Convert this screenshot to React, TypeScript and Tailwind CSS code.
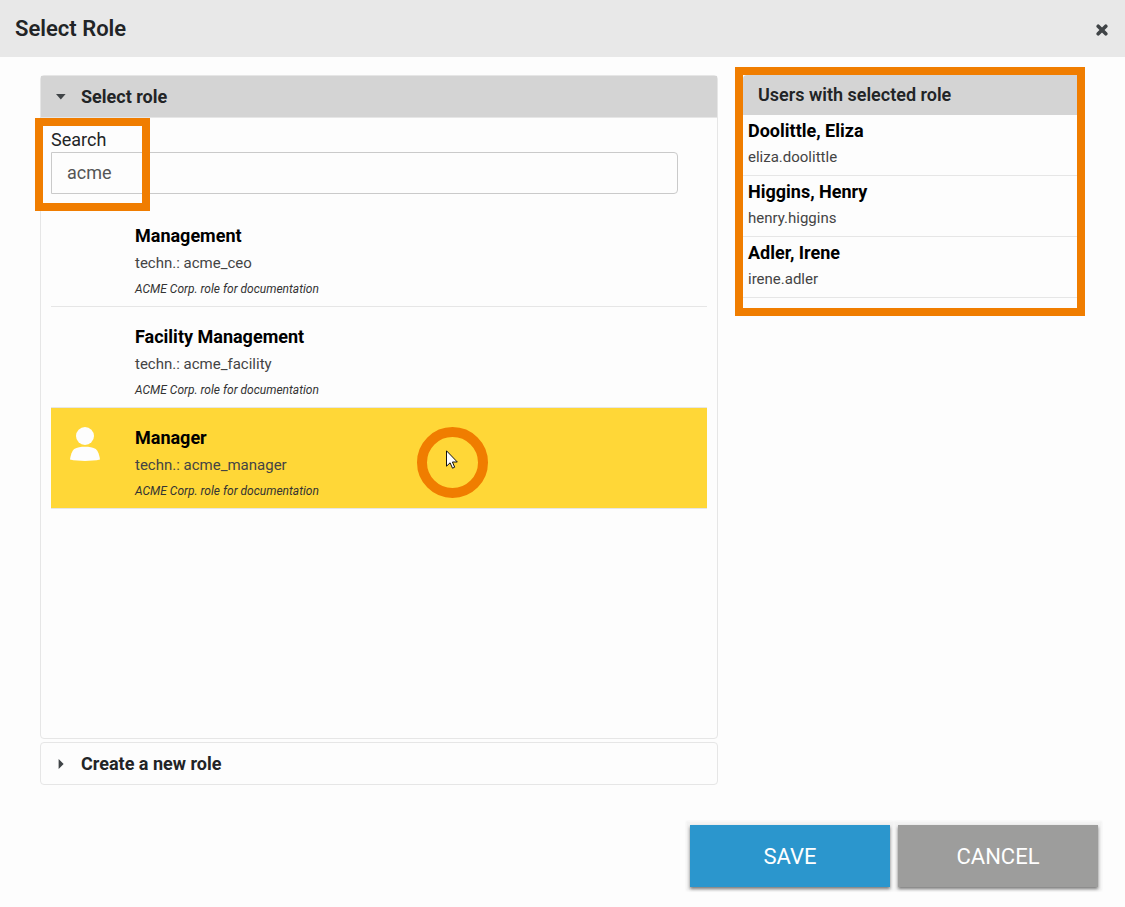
import { useState } from "react";

interface Role {
  id: string;
  name: string;
  description: string;
}

interface User {
  login: string;
  name: string;
}

const roles: Role[] = [
  { id: "acme_ceo", name: "Management", description: "ACME Corp. role for documentation" },
  { id: "acme_facility", name: "Facility Management", description: "ACME Corp. role for documentation" },
  { id: "acme_manager", name: "Manager", description: "ACME Corp. role for documentation" },
];

const users: User[] = [
  { login: "eliza.doolittle", name: "Doolittle, Eliza" },
  { login: "henry.higgins", name: "Higgins, Henry" },
  { login: "irene.adler", name: "Adler, Irene" },
];

function CloseIcon() {
  return (
    <svg viewBox="0 0 12 12" className="size-3" fill="none" stroke="#404447" strokeWidth="3.6" strokeLinecap="round" aria-hidden="true">
      <path d="M2.2 2.2 9.8 9.8M9.8 2.2 2.2 9.8" />
    </svg>
  );
}

function PersonIcon() {
  return (
    <svg viewBox="0 0 30 34" className="h-[34px] w-[30px]" fill="#fdfdfd" aria-hidden="true">
      <circle cx="15" cy="9" r="9" />
      <path d="M0 32.6C.6 28 2 23.8 4.2 22 7 20.3 11 19.8 15 19.8s8 .5 10.8 2.2C28 23.8 29.4 28 30 32.6 26 33.7 20 34 15 34S4 33.7 0 32.6Z" />
    </svg>
  );
}

function Pointer() {
  return (
    <svg viewBox="0 0 12 19" className="absolute top-[23px] left-[29px] h-[19px] w-3" aria-hidden="true">
      <path
        d="M.5.8v15.4l3.6-3.4 2.4 5.4 2.2-1-2.3-5.2h4.9Z"
        fill="#fff"
        stroke="#111"
        strokeWidth="1"
      />
    </svg>
  );
}

export default function App() {
  const [search, setSearch] = useState("acme");
  const [selected, setSelected] = useState("acme_manager");

  const visible = roles.filter((r) => r.id.includes(search.trim().toLowerCase()));

  return (
    <div className="flex min-h-screen flex-col bg-[#fdfdfd] font-[Roboto,sans-serif] text-[#222426]">
      {/* Title bar */}
      <header className="flex h-[57px] items-center justify-between bg-[#e8e8e8] pr-[17px] pl-[15px]">
        <h1 className="text-[22px] font-semibold">Select Role</h1>
        <button type="button" aria-label="Close" className="pt-0.5">
          <CloseIcon />
        </button>
      </header>

      <main className="flex flex-1 items-stretch gap-[25px] pt-[18px] pr-12 pl-10">
        <div className="flex min-w-0 flex-1 flex-col gap-[3px]">
          {/* Role picker */}
          <section className="flex flex-1 flex-col rounded border border-[#e6e6e6]">
            <h2 className="border-b border-[#e6e6e6] bg-[#d4d4d4] text-lg font-bold">
              <button type="button" aria-expanded="true" className="flex h-[41px] w-full items-center gap-[15px] pl-[15px] text-left">
                <svg viewBox="0 0 10 6" className="w-2.5" fill="#404447" aria-hidden="true">
                  <path d="M0 0h9.6L4.8 5.4Z" />
                </svg>
                Select role
              </button>
            </h2>

            <div className="px-2.5 pt-2">
              <div className="relative pr-[29px] pb-3">
                <label htmlFor="search" className="block pt-0.5 text-lg leading-6">
                  Search
                </label>
                <input
                  id="search"
                  type="text"
                  value={search}
                  onChange={(e) => setSearch(e.target.value)}
                  className="block h-[42px] w-full rounded-r border border-[#cacaca] bg-transparent px-[15px] pb-0.5 text-lg text-[#555] outline-none"
                />
                <div className="pointer-events-none absolute -top-2 -left-4 h-[93px] w-[115px] border-8 border-[#f07d00]" />
              </div>

              <ul>
                {visible.map((role) => {
                  const active = role.id === selected;
                  return (
                    <li key={role.id} className="border-b border-[#e6e6e6]">
                      <button
                        type="button"
                        aria-pressed={active}
                        onClick={() => setSelected(role.id)}
                        className={`relative flex h-[100px] w-full pt-4 text-left ${active ? "bg-[#ffd737]" : ""}`}
                      >
                        <span className="w-[84px] shrink-0 pt-[3px] pl-[19px]">{active && <PersonIcon />}</span>
                        <span className="flex flex-col leading-[26px]">
                          <strong className="pb-px text-lg leading-[27px] font-bold text-black">{role.name}</strong>
                          <span className="text-[15px] text-[#444]">techn.: {role.id}</span>
                          <em className="text-xs leading-[26px] text-[#333]">{role.description}</em>
                        </span>
                        {active && (
                          <span className="absolute top-[19px] left-[366px] size-[71px] rounded-full border-10 border-[#f07d00]">
                            <span className="absolute -top-2.5 -left-2.5">
                              <Pointer />
                            </span>
                          </span>
                        )}
                      </button>
                    </li>
                  );
                })}
              </ul>
            </div>
          </section>

          <section className="rounded border border-[#e6e6e6]">
            <h2 className="text-lg font-bold">
              <button type="button" aria-expanded="false" className="flex h-[41px] w-full items-center gap-[15px] pl-[15px] text-left">
                <svg viewBox="0 0 10 10" className="w-2.5" fill="#404447" aria-hidden="true">
                  <path d="M2.6 0v10l5-5Z" />
                </svg>
                Create a new role
              </button>
            </h2>
          </section>
        </div>

        {/* Members of the selected role */}
        <aside className="relative w-[334px] self-start pb-2.5">
          <h2 className="rounded-tl bg-[#d4d4d4] pl-[15px] text-lg leading-10 font-semibold">Users with selected role</h2>
          <ul>
            {users.map((user) => (
              <li key={user.login} className="flex h-[61px] flex-col border-b border-[#e6e6e6] pt-[3px] pl-[5px] leading-[26px]">
                <strong className="text-lg leading-[26px] font-bold text-black">{user.name}</strong>
                <span className="text-[15px] text-[#444]">{user.login}</span>
              </li>
            ))}
          </ul>
          <div className="pointer-events-none absolute -inset-2 border-8 border-[#f07d00]" />
        </aside>
      </main>

      <footer className="flex justify-end gap-2 pt-10 pr-[27px] pb-5 text-[22px] text-white">
        <button
          type="button"
          className="h-[62px] w-[200px] bg-[#2b96cd] shadow-[0_2px_3px_rgba(0,0,0,0.5),0_0_2px_4px_#f3f3f3]"
        >
          SAVE
        </button>
        <button
          type="button"
          className="h-[62px] w-[200px] bg-[#9d9d9c] shadow-[0_2px_3px_rgba(0,0,0,0.5),0_0_2px_4px_#f3f3f3]"
        >
          CANCEL
        </button>
      </footer>
    </div>
  );
}
